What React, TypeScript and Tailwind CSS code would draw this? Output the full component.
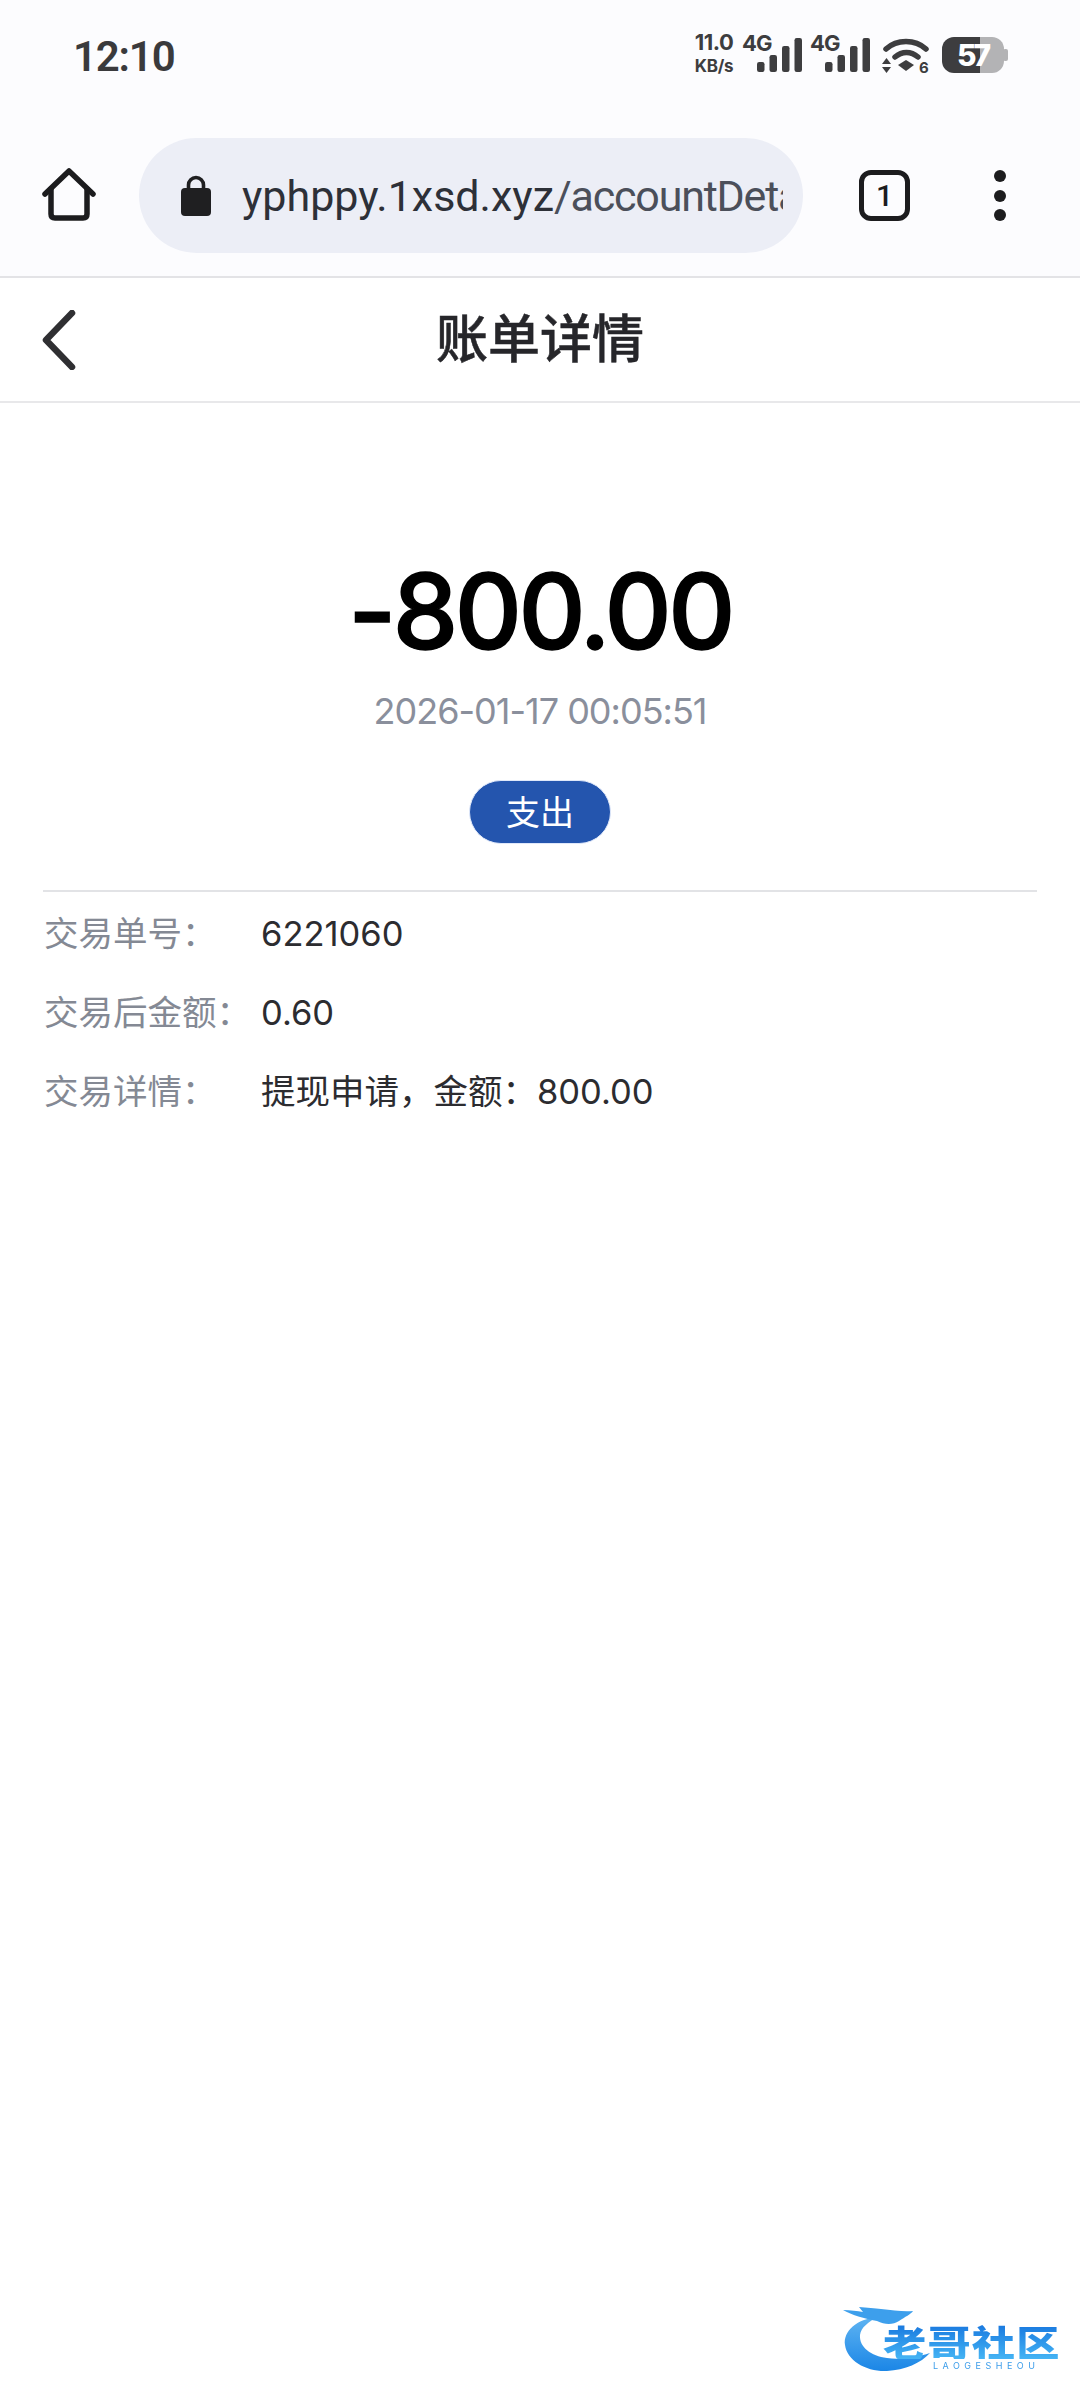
const sans = "font-['Inter','Noto_Sans_CJK_SC',sans-serif]";

const SignalIcon = () => (
    <svg width="60" height="40" viewBox="0 0 60 40" fill="#3d3d3f" className="overflow-visible">
        <text x="0" y="17" fontFamily="Inter, sans-serif" fontWeight="700" fontSize="22" letterSpacing="-1">4G</text>
        <rect x="15" y="28" width="7.5" height="10" rx="2.2" />
        <rect x="27.5" y="21" width="7.5" height="17" rx="2.2" />
        <rect x="40" y="12" width="7.5" height="26" rx="2.2" />
        <rect x="52.5" y="4" width="7.5" height="34" rx="2.2" />
    </svg>
);

const WifiIcon = () => (
    <svg width="48" height="36" viewBox="0 0 48 36" fill="none" className="overflow-visible">
        <path d="M4 11 C 15 1, 33 1, 44 11" stroke="#3d3d3f" strokeWidth="5.5" strokeLinecap="round" />
        <path d="M13 19 C 20 13, 29 13, 36 19" stroke="#3d3d3f" strokeWidth="5.5" strokeLinecap="round" />
        <path d="M16 27 L24 22 L32 27 L24 33 Z" fill="#3d3d3f" />
        <path d="M0 26 L4.5 20 L9 26 Z" fill="#3d3d3f" />
        <path d="M0 29 L9 29 L4.5 35 Z" fill="#3d3d3f" />
        <text x="37" y="35" fontFamily="Inter, sans-serif" fontWeight="700" fontSize="15" fill="#3d3d3f">6</text>
    </svg>
);

const BatteryIcon = () => (
    <svg width="66" height="36" viewBox="0 0 66 36" className="overflow-visible">
        <path d="M38 0 H12 A12 12 0 0 0 0 12 V24 A12 12 0 0 0 12 36 H38 Z" fill="#3d3d3f" />
        <path d="M38 0 H50 A12 12 0 0 1 62 12 V24 A12 12 0 0 1 50 36 H38 Z" fill="#b3b3b5" />
        <rect x="61" y="12" width="5" height="12" rx="2" fill="#b3b3b5" />
        <text x="15" y="29" fontFamily="Inter, sans-serif" fontWeight="800" fontSize="30" letterSpacing="-3" fill="#fff">57</text>
    </svg>
);

const HomeIcon = () => (
    <svg width="54" height="54" viewBox="0 0 54 54" fill="none" stroke="#1c1c1e" strokeWidth="5.5" strokeLinejoin="round" strokeLinecap="round">
        <path d="M3 26 L27 3 L51 26" />
        <path d="M9 21 V46 Q9 50 13 50 H41 Q45 50 45 46 V21" />
    </svg>
);

const LockIcon = () => (
    <svg width="30" height="41" viewBox="0 0 30 41" className="shrink-0">
        <path d="M7.5 15 V10 A7.5 7.5 0 0 1 22.5 10 V15" fill="none" stroke="#1f1f21" strokeWidth="3.6" />
        <rect x="0" y="13" width="30" height="28" rx="4" fill="#1f1f21" />
    </svg>
);

const Logo = () => (
    <div className="absolute right-[13px] bottom-[28px] w-[224px] h-[67px] blur-[0.6px]">
        <svg width="224" height="67" viewBox="0 0 224 67" className="absolute left-0 top-0" fill="none">
            <defs>
                <linearGradient id="drg" x1="0" y1="0" x2="0" y2="1">
                    <stop offset="0" stopColor="#5fb4f2" />
                    <stop offset="1" stopColor="#1b86e6" />
                </linearGradient>
            </defs>
            <path d="M34 12 C 14 14, 0 26, 2 40 C 4 56, 24 67, 44 66 C 62 65, 78 58, 87 48 C 74 52, 58 55, 44 53 C 28 51, 16 42, 17 30 C 18 22, 26 17, 34 12 Z" fill="url(#drg)" />
            <path d="M0 5 C 8 5, 14 6, 20 7 L 16 2 C 24 3, 32 3, 38 4 C 50 5, 60 7, 70 6 C 68 9, 62 12, 56 16 C 50 20, 42 20, 34 16 C 24 14, 8 10, 0 5 Z" fill="#3d9fec" />
        </svg>
        <div className="absolute left-[40px] top-[18px] origin-left scale-x-[1.2] text-[36px] leading-[36px] font-black whitespace-nowrap tracking-[1px] font-['Noto_Sans_CJK_SC',sans-serif] text-transparent bg-clip-text bg-gradient-to-b from-[#1876de] to-[#45b4f4]">老哥社区</div>
        <div className="absolute left-[90px] top-[56px] text-[9px] leading-[10px] tracking-[4.5px] whitespace-nowrap text-[#3c9dea] font-['Inter',sans-serif]">LAOGESHEOU</div>
    </div>
);

const rows = [
    { label: '交易单号\uFF1A', value: '6221060' },
    { label: '交易后金额\uFF1A', value: '0.60' },
    { label: '交易详情\uFF1A', value: '提现申请\uFF0C金额\uFF1A800.00' },
];

export default function App() {
    return (
        <div className={`relative w-[1080px] h-[2400px] overflow-hidden bg-white ${sans}`}>
            <div className="bg-[#fcfcfe]">
                {/* status bar */}
                <div className="h-[115px] flex items-start pt-[31px] pl-[73px] pr-[72px]">
                    <span className="text-[42px] leading-[52px] font-semibold tracking-[-1.2px] text-[#3a3a3c] font-['Roboto',sans-serif]">12:10</span>
                    <div className="ml-auto flex items-start pt-[3px]">
                        <div className="w-[46px] text-[#3d3d3f] font-bold text-center mr-[5px] font-['Inter',sans-serif]">
                            <div className="text-[22px] leading-[16px] tracking-[-0.5px]">11.0</div>
                            <div className="mt-[9px] text-[17px] leading-[14px] tracking-[-0.3px]">KB/s</div>
                        </div>
                        <SignalIcon />
                        <div className="w-[8px]" />
                        <SignalIcon />
                        <div className="w-[12px] shrink-0" />
                        <div className="mt-[4px]"><WifiIcon /></div>
                        <div className="w-[12px] shrink-0" />
                        <div className="mt-[3px]"><BatteryIcon /></div>
                    </div>
                </div>
                {/* browser toolbar */}
                <div className="h-[161px] flex items-start pt-[23px] pl-[42px]">
                    <div className="mt-[30px]"><HomeIcon /></div>
                    <div className="ml-[43px] w-[664px] h-[115px] rounded-full bg-[#eceef6] flex items-center pl-[42px]">
                        <LockIcon />
                        <div className="ml-[31px] w-[541px] overflow-hidden whitespace-nowrap text-[43px] leading-[56px] text-[#2d3038] font-['Roboto',sans-serif]">yphppy.1xsd.xyz<span className="text-[#4b4f5a] tracking-[-1.2px]">/accountDetail</span></div>
                    </div>
                    <div className="ml-[56px] mt-[32px] w-[51px] h-[51px] rounded-[12px] border-[5px] border-[#1c1c1e] flex items-center justify-center text-[30px] font-medium text-[#1c1c1e] font-['Roboto',sans-serif]">1</div>
                    <div className="ml-[84px] mt-[32px] h-[51px] flex flex-col justify-between">
                        <div className="w-[12px] h-[12px] rounded-full bg-[#1c1c1e]" />
                        <div className="w-[12px] h-[12px] rounded-full bg-[#1c1c1e]" />
                        <div className="w-[12px] h-[12px] rounded-full bg-[#1c1c1e]" />
                    </div>
                </div>
            </div>
            {/* page header */}
            <div className="h-[127px] border-t-[2px] border-b-[2px] border-t-[#e3e3e6] border-b-[#e8e8ea] grid grid-cols-[1fr_auto_1fr] items-center">
                <svg width="36" height="60" viewBox="0 0 36 60" fill="none" className="ml-[41px]">
                    <path d="M31 3 L5 30 L31 57" stroke="#2f2f32" strokeWidth="6.5" strokeLinecap="round" strokeLinejoin="round" />
                </svg>
                <div className="text-[52px] leading-[60px] font-medium text-[#26262a] [-webkit-text-stroke:0.5px_#26262a]">账单详情</div>
                <div />
            </div>
            {/* amount */}
            <div className="flex flex-col items-center">
                <div className="mt-[148px] text-[104px] leading-[120px] font-medium tracking-[-3.5px] text-black [-webkit-text-stroke:1.5px_#000]">-800.00</div>
                <div className="mt-[15px] text-[36px] leading-[50px] tracking-[-1px] text-[#8a8f9c]">2026-01-17 00:05:51</div>
                <div className="mt-[44px] w-[142px] h-[64px] rounded-full bg-[#2455ae] border border-[#dfe8fa] flex items-center justify-center text-[34px] text-white">支出</div>
            </div>
            <div className="mt-[46px] mx-[43px] h-[2px] bg-[#e2e3e6]" />
            <div className="pt-[17px] pl-[44px] flex flex-col gap-[29px]">
                {rows.map((row) => (
                    <div key={row.label} className="flex text-[34.5px] leading-[50px]">
                        <div className="w-[217px] text-[#848994]">{row.label}</div>
                        <div className="text-[#2c2c30]">{row.value}</div>
                    </div>
                ))}
            </div>
            <Logo />
        </div>
    );
}
